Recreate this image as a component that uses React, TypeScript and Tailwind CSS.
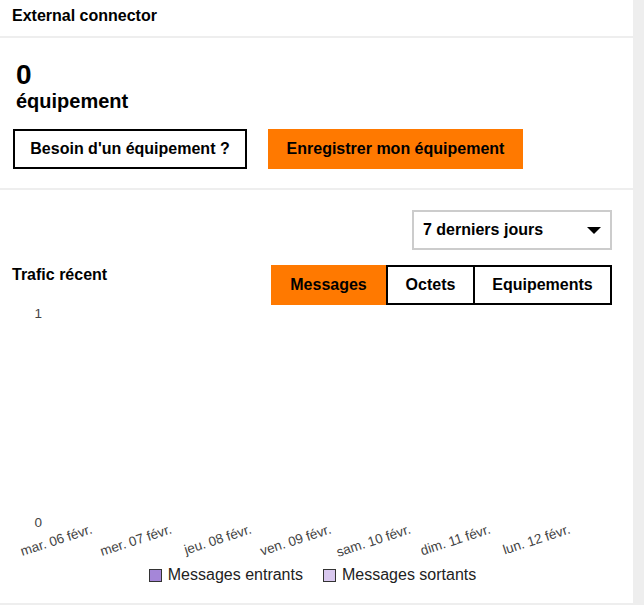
import { useState } from "react";

const days = [
  "mar. 06 févr.",
  "mer. 07 févr.",
  "jeu. 08 févr.",
  "ven. 09 févr.",
  "sam. 10 févr.",
  "dim. 11 févr.",
  "lun. 12 févr.",
];

const tabs = ["Messages", "Octets", "Equipements"];

export default function App() {
  const [tab, setTab] = useState("Messages");

  return (
    <div
      className="w-full h-[605px] bg-[#eeeeee]"
      style={{ fontFamily: '"Liberation Sans", Arial, sans-serif' }}
    >
      <div className="w-[633px] h-[603px] bg-white flex flex-col text-black">
        {/* header */}
        <div className="h-9 pt-[6px] px-[12px] text-[16px] leading-5 font-bold">
          External connector
        </div>
        <div className="h-[2px] bg-[#eeeeee]" />

        {/* devices */}
        <div className="pt-[23px] pb-[19px] px-[13px]">
          <div className="pl-[3px] text-[28px] leading-[28px] font-bold">0</div>
          <div className="pl-[3px] text-[20px] leading-6 font-bold">équipement</div>
          <div className="flex mt-4">
            <button className="w-[234px] h-10 border-2 border-black bg-white text-[16px] font-bold">
              Besoin d'un équipement ?
            </button>
            <button className="w-[255px] h-10 ml-[21px] bg-[#ff7900] text-[16px] font-bold">
              Enregistrer mon équipement
            </button>
          </div>
        </div>
        <div className="h-[2px] bg-[#eeeeee]" />

        {/* traffic */}
        <div className="flex flex-col pt-5 pb-[18px]">
          <div className="flex justify-end pr-[21px]">
            <div className="w-[200px] h-10 border-2 border-[#cccccc] pl-[9px] pr-[9px] flex items-center justify-between text-[16px] font-bold">
              <span>7 derniers jours</span>
              <svg width="14" height="7" viewBox="0 0 14 7">
                <path d="M0 0 L14 0 L7 7 Z" fill="#000" />
              </svg>
            </div>
          </div>

          <div className="flex justify-between items-start mt-[15px] pl-[12px] pr-[21px]">
            <div className="text-[16px] leading-5 font-bold">Trafic récent</div>
            <div className="flex">
              {tabs.map((t) => {
                const active = t === tab;
                const w =
                  t === "Messages"
                    ? "w-[115px] border-2"
                    : t === "Octets"
                    ? "w-[89px] border-2"
                    : "w-[137px] border-2 border-l-0";
                return (
                  <button
                    key={t}
                    onClick={() => setTab(t)}
                    className={`${w} h-10 text-[16px] font-bold ${
                      active ? "bg-[#ff7900] border-[#ff7900]" : "bg-white border-black"
                    }`}
                  >
                    {t}
                  </button>
                );
              })}
            </div>
          </div>

          <svg width="633" height="260" className="block">
            <g fontFamily='"Liberation Sans", Arial, sans-serif' fontSize="13.5" fill="#444">
              <text x="42" y="13" textAnchor="end">1</text>
              <text x="42" y="222" textAnchor="end">0</text>
              {days.map((d, i) => {
                const x = 93 + i * 79.67;
                return (
                  <text key={d} x={x} y={228} textAnchor="end" transform={`rotate(-18 ${x} 228)`}>
                    {d}
                  </text>
                );
              })}
            </g>
          </svg>

          <div className="flex justify-center pr-[8px] h-5 items-center text-[16px] text-[#222]">
            <span className="w-[13px] h-[13px] border border-[#333] bg-[#a586d8]" />
            <span className="ml-[6px]">Messages entrants</span>
            <span className="ml-5 w-[13px] h-[13px] border border-[#333] bg-[#d9c8ef]" />
            <span className="ml-[6px]">Messages sortants</span>
          </div>
        </div>
      </div>
    </div>
  );
}
